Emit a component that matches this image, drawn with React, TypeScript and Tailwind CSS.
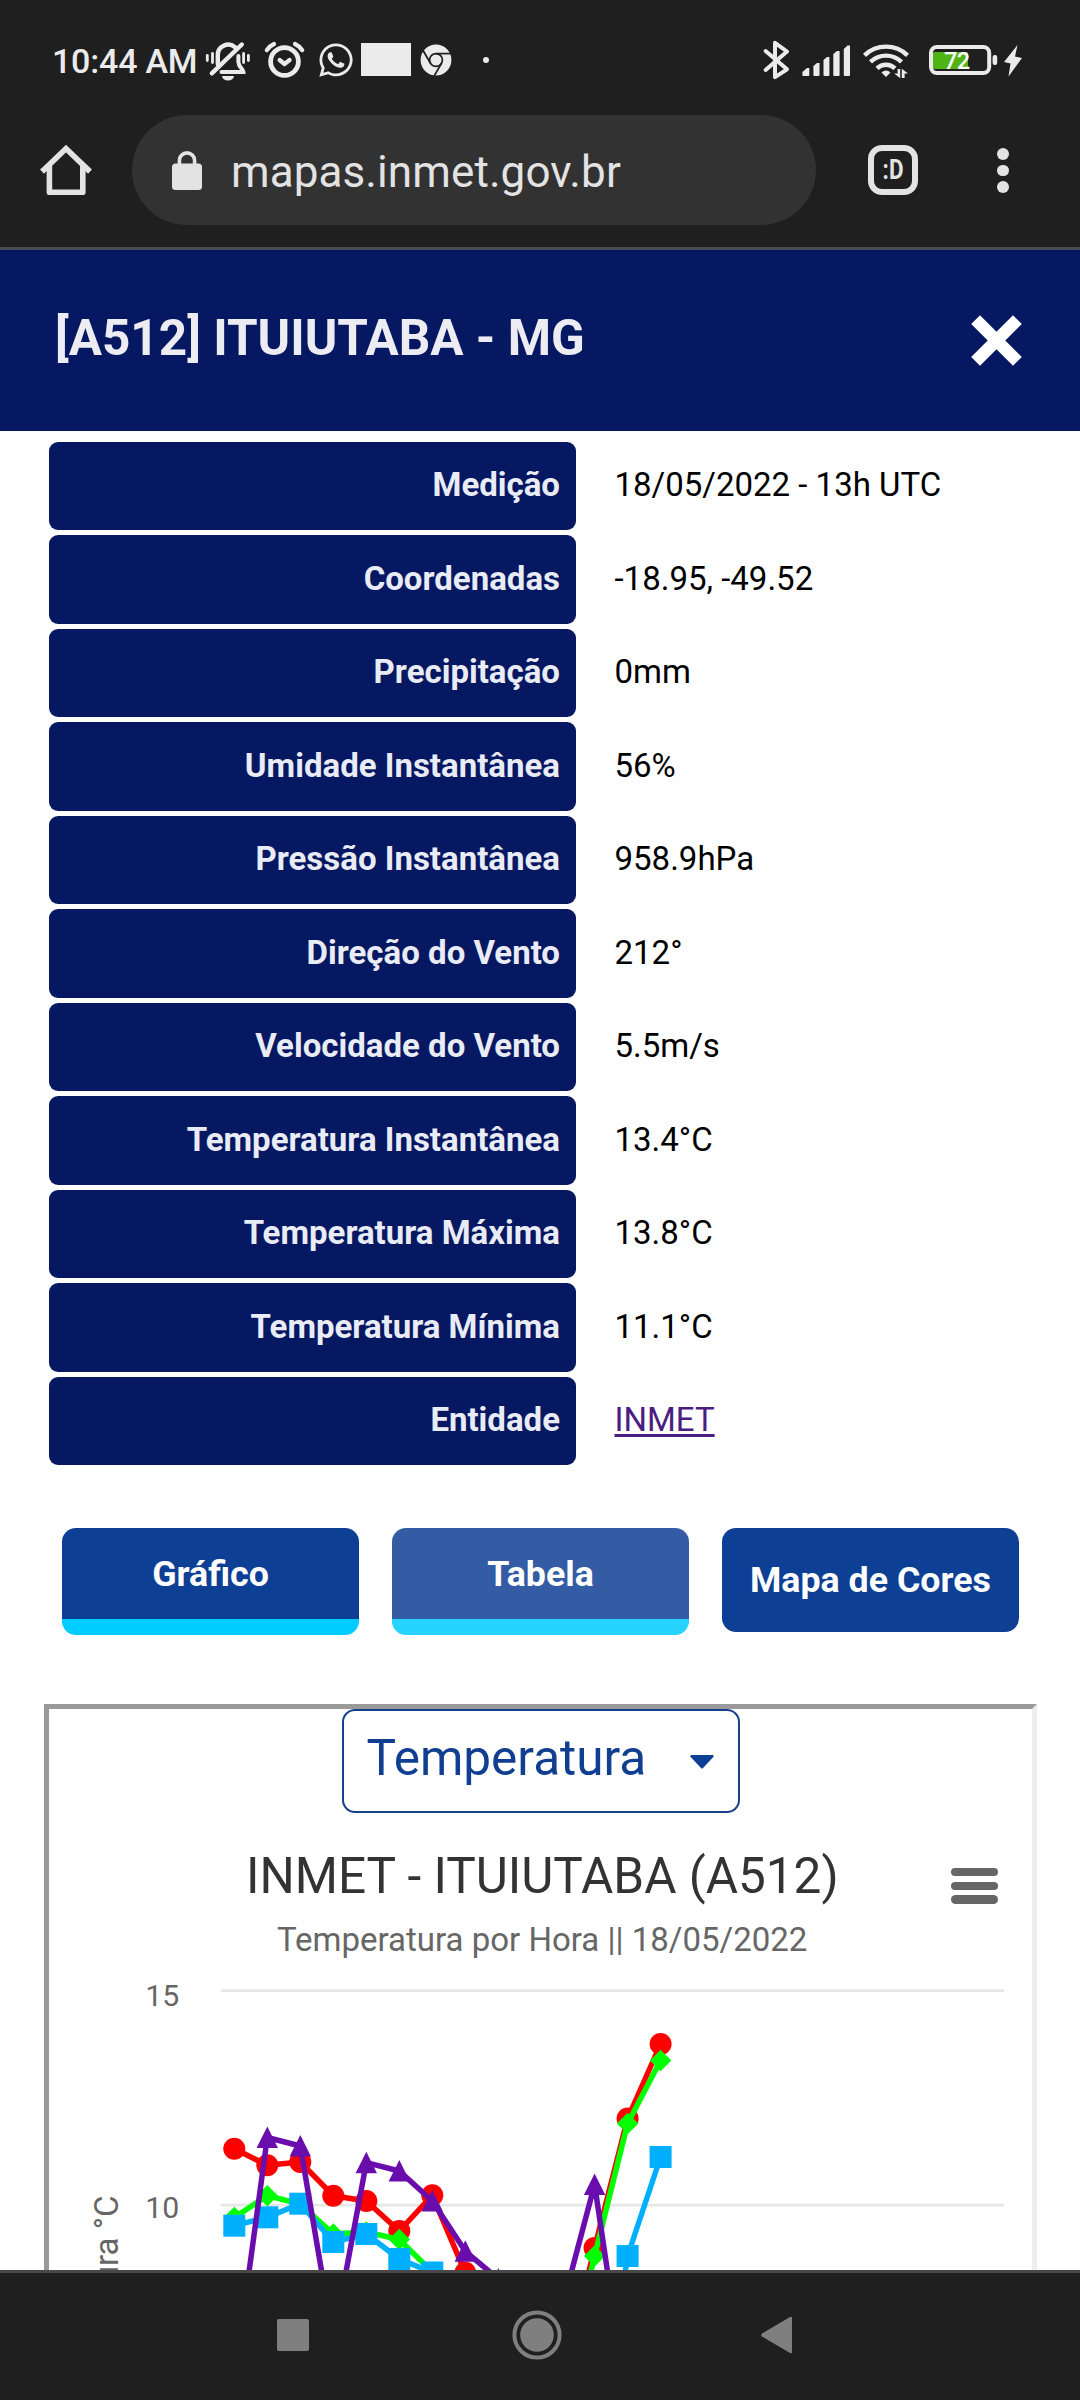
import type { ReactNode } from 'react';
import { FaWhatsapp } from 'react-icons/fa';

const readings = [
  { label: 'Medição', value: '18/05/2022 - 13h UTC' },
  { label: 'Coordenadas', value: '-18.95, -49.52' },
  { label: 'Precipitação', value: '0mm' },
  { label: 'Umidade Instantânea', value: '56%' },
  { label: 'Pressão Instantânea', value: '958.9hPa' },
  { label: 'Direção do Vento', value: '212°' },
  { label: 'Velocidade do Vento', value: '5.5m/s' },
  { label: 'Temperatura Instantânea', value: '13.4°C' },
  { label: 'Temperatura Máxima', value: '13.8°C' },
  { label: 'Temperatura Mínima', value: '11.1°C' },
  { label: 'Entidade', value: 'INMET', link: true },
];

type Shape = 'circle' | 'diamond' | 'square' | 'triangle';

// x position of every hour, midnight first
const hours = [234.3, 267.3, 300.3, 333.3, 366.3, 399.3, 432.3, 465.3, 498.3, 531, 561.6, 594.6, 627.6, 660.6];

const series: { color: string; shape: Shape; ys: number[] }[] = [
  {
    color: '#ff0000',
    shape: 'circle',
    ys: [2148.7, 2165.3, 2162, 2195.7, 2201, 2231, 2195.3, 2272.8, 2330, 2390, 2385, 2247.9, 2118.5, 2044],
  },
  {
    color: '#00ff00',
    shape: 'diamond',
    ys: [2217.5, 2195.7, 2204, 2234, 2232, 2239.5, 2272, 2330, 2390, 2410, 2395, 2256, 2123.5, 2060.5],
  },
  {
    color: '#00b0ff',
    shape: 'square',
    ys: [2225.7, 2217.3, 2203.7, 2242, 2234, 2259, 2272.5, 2340, 2400, 2420, 2430, 2480, 2256, 2157],
  },
  {
    color: '#6a0dad',
    shape: 'triangle',
    ys: [2380, 2137.5, 2146, 2340, 2162.7, 2171, 2201, 2251.3, 2279, 2390, 2309, 2184.5, 2407, 2480],
  },
];

function Marker({ shape, x, y, color }: { shape: Shape; x: number; y: number; color: string }) {
  if (shape === 'circle') return <circle cx={x} cy={y} r={11} fill={color} />;
  if (shape === 'square') return <rect x={x - 11} y={y - 11} width={22} height={22} fill={color} />;
  if (shape === 'diamond') {
    return <path d={`M${x} ${y - 10.7}L${x + 10.7} ${y}L${x} ${y + 10.7}L${x - 10.7} ${y}Z`} fill={color} />;
  }
  return <path d={`M${x} ${y - 11}L${x + 10.7} ${y + 10.5}H${x - 10.7}Z`} fill={color} />;
}

function BellOffIcon() {
  return (
    <svg viewBox="205 40 46 42" className="h-[42px] w-[46px]" fill="none" stroke="#ebebeb" strokeWidth="4.4" strokeLinecap="round">
      <path d="M217.8 64V55.5A10.4 10.4 0 0 1 235 47.2" />
      <path d="M211.8 73.3L241.8 44.5" />
      <path d="M238.4 56V62C238.4 67 243 68.5 243.4 72H221.5" strokeWidth="4" />
      <path d="M222 76H234A6 4.5 0 0 1 222 76Z" fill="#ebebeb" stroke="none" />
      <path d="M207.3 55.5V60.5M212.5 53.5V62.5M243.6 53.5V62.5M248.4 55.5V60.5" strokeWidth="2.8" />
    </svg>
  );
}

function AlarmIcon() {
  return (
    <svg viewBox="263 40 43 42" className="h-[42px] w-[43px]" fill="none" stroke="#ebebeb" strokeLinecap="round" strokeLinejoin="round">
      <circle cx="284.5" cy="61.5" r="13.9" strokeWidth="4.8" />
      <path d="M279.6 60L284.5 64L289.6 60" strokeWidth="4.2" />
      <path d="M266.8 50.2Q269.5 46 274 44M302.2 50.2Q299.5 46 295 44" strokeWidth="4.2" />
    </svg>
  );
}

function ChromeIcon() {
  return (
    <svg viewBox="-16 -16 32 32" className="h-8 w-8">
      <circle r="15.4" fill="#ebebeb" />
      <g stroke="#1f1f1f" strokeWidth="1.7" fill="none">
        <circle r="6.4" />
        <path d="M0 -6.4H15" />
        <path d="M0 -6.4H15" transform="rotate(120)" />
        <path d="M0 -6.4H15" transform="rotate(240)" />
      </g>
    </svg>
  );
}

function RadioIcons() {
  return (
    <svg viewBox="760 38 152 44" className="h-[44px] w-[152px]" fill="#ebebeb">
      {/* bluetooth */}
      <path
        d="M765.6 51L787 69.3L775 77.2V42.8L787 51.5L765.6 70"
        fill="none"
        stroke="#ebebeb"
        strokeWidth="4"
        strokeLinecap="round"
        strokeLinejoin="round"
      />
      {/* signal */}
      <path d="M802.4 72L807 68H809.3V75Q809.3 76 808.3 76H803.4Q802.4 76 802.4 75Z" />
      <path d="M813.4 66L817 63H819.5V75Q819.5 76 818.5 76H814.4Q813.4 76 813.4 75Z" />
      <path d="M823.5 60L827 57H829.4V75Q829.4 76 828.4 76H824.5Q823.5 76 823.5 75Z" />
      <path d="M833.3 54L837 51H839.6V75Q839.6 76 838.6 76H834.3Q833.3 76 833.3 75Z" />
      <path d="M843.8 49L847.5 45.6H850V75Q850 76 849 76H844.8Q843.8 76 843.8 75Z" />
      {/* wifi */}
      <g fill="none" stroke="#ebebeb" strokeWidth="4.4">
        <path d="M864.5 55.3A31 31 0 0 1 907.5 55.3" />
        <path d="M870.5 61.8A22.5 22.5 0 0 1 901.5 61.8" />
        <path d="M877 68.3A13 13 0 0 1 895 68.3" />
      </g>
      <path d="M881.5 72.5Q886 68.7 890.5 72.5L886 77Z" />
      <path d="M897.6 69H900.2V78.2L894.2 73.6H897.6ZM901.8 78V68.8L908 73.4H904.6V78Z" />
    </svg>
  );
}

function BatteryIcon() {
  return (
    <div className="relative h-[30px] w-[95px]">
      <svg viewBox="929 45 95 30" className="h-[30px] w-[95px] overflow-visible">
        <rect x="933" y="52" width="35" height="17" rx="1.5" fill="#4fb314" />
        <rect x="931" y="47" width="58.2" height="26" rx="6" fill="none" stroke="#ebebeb" strokeWidth="4" />
        <rect x="992.6" y="55" width="4.6" height="10" rx="2" fill="#ebebeb" />
        <path d="M1017.5 45L1004 62L1010.5 63.5L1008.5 76.5L1022 58L1015 56.5Z" fill="#ebebeb" />
      </svg>
      <span className="absolute left-[15px] top-[2px] text-[23.5px] leading-[28px] font-medium tracking-[-0.5px] text-white">72</span>
    </div>
  );
}

function StatusBar() {
  return (
    <div className="flex h-[115px] items-start pt-[38px] text-[#ebebeb]">
      <span className="ml-[52px] mt-px w-[153px] whitespace-nowrap text-[34px] leading-[44px] font-medium tracking-[-0.2px]">10:44 AM</span>
      <div className="mt-[2px]"><BellOffIcon /></div>
      <div className="ml-3 mt-[2px]"><AlarmIcon /></div>
      <FaWhatsapp className="ml-[11px] mt-[3px] h-[38px] w-[38px]" />
      <div className="ml-[6px] mt-[5px] h-[33px] w-[50px] bg-[#ebebeb]" />
      <div className="ml-[9px] mt-[6px]"><ChromeIcon /></div>
      <div className="ml-[31px] mt-[19px] h-[6px] w-[6px] rounded-full bg-[#ebebeb]" />
      <div className="ml-auto"><RadioIcons /></div>
      <div className="ml-[17px] mr-[56px] mt-[7px]"><BatteryIcon /></div>
    </div>
  );
}

function AddressBar() {
  return (
    <div className="flex h-[132px] items-start">
      <svg viewBox="40 143 52 54" className="ml-10 mt-7 h-[54px] w-[52px]" fill="none" stroke="#e3e3e3" strokeWidth="5.6" strokeLinecap="round">
        <path d="M44 169.7L66 148.6L88 169.7" strokeLinecap="square" strokeLinejoin="miter" />
        <path d="M49.4 167V192.2H82.8V167" strokeLinejoin="round" />
      </svg>
      <div className="ml-10 flex h-[110px] w-[684px] items-center rounded-full bg-[#323232] pl-10">
        <svg viewBox="172 149 30 41" className="h-[41px] w-[30px]">
          <rect x="172" y="162.5" width="30" height="26.5" rx="3.5" fill="#e3e3e3" />
          <path d="M179.4 164V159.5A7.6 7.6 0 0 1 194.6 159.5V164" fill="none" stroke="#e3e3e3" strokeWidth="3.6" />
        </svg>
        <span className="ml-[29px] mt-1 text-[44px] leading-[56px] tracking-[0.1px] text-[#e3e3e3]">mapas.inmet.gov.br</span>
      </div>
      <div className="ml-[52px] mt-[30px] flex h-[50px] w-[50px] items-center justify-center rounded-[14px] border-[6px] border-[#e3e3e3]">
        <span className="scale-x-80 text-[28px] leading-none font-bold text-[#e3e3e3]">:D</span>
      </div>
      <div className="ml-[79px] mt-[33px] flex flex-col gap-[5px]">
        <i className="h-[11.5px] w-[11.5px] rounded-full bg-[#e3e3e3]" />
        <i className="h-[11.5px] w-[11.5px] rounded-full bg-[#e3e3e3]" />
        <i className="h-[11.5px] w-[11.5px] rounded-full bg-[#e3e3e3]" />
      </div>
    </div>
  );
}

function StationHeader() {
  return (
    <header className="flex h-[181px] items-start justify-between bg-[#051861] pl-[55px] pr-[58px]">
      <h1 className="mt-[59px] text-[49.5px] leading-[58px] font-bold text-[#ececf2]">[A512] ITUIUTABA - MG</h1>
      <svg viewBox="0 0 51 51" className="mt-[65px] h-[51px] w-[51px]" stroke="#fff" strokeWidth="12.5">
        <path d="M4.6 4.6L46.4 46.4M46.4 4.6L4.6 46.4" />
      </svg>
    </header>
  );
}

function Readings() {
  return (
    <dl className="flex flex-col gap-[5.2px] pl-[49px] pt-[11px] text-[33px] leading-[38px]">
      {readings.map((item) => (
        <div key={item.label} className="flex h-[88.3px]">
          <dt className="w-[527px] rounded-[9px] bg-[#051861] pr-4 pt-[24.3px] text-right font-bold text-[#e9ebf5]">{item.label}</dt>
          <dd className="pl-[38.5px] pt-[24.3px] text-black">
            {item.link ? (
              <a className="text-[#4b1d80] underline decoration-[3px] underline-offset-[3px]">{item.value}</a>
            ) : (
              item.value
            )}
          </dd>
        </div>
      ))}
    </dl>
  );
}

function TabButton({ children, className }: { children: ReactNode; className: string }) {
  return (
    <button className={`flex w-[297px] justify-center rounded-[14px] text-[35.75px] leading-[42px] font-bold whitespace-nowrap text-white ${className}`}>
      {children}
    </button>
  );
}

function Chart() {
  return (
    <svg viewBox="49 1975 983 295" className="block h-[295px] w-[983px]" fontFamily="Roboto, sans-serif" fill="#666">
      <path d="M220.7 1990.6H1004.3M220.7 2205.1H1004.3" stroke="#e6e6e6" strokeWidth="2.75" />
      <text x="179.3" y="2005.7" textAnchor="end" fontSize="30.25">15</text>
      <text x="179.3" y="2217.7" textAnchor="end" fontSize="30.25">10</text>
      <text transform="translate(117.7 2195.5) rotate(-90)" textAnchor="end" fontSize="33">Temperatura °C</text>
      {series.map((s) => (
        <g key={s.shape}>
          <polyline
            points={s.ys.map((y, i) => `${hours[i]},${y}`).join(' ')}
            fill="none"
            stroke={s.color}
            strokeWidth={5.5}
            strokeLinejoin="round"
          />
          {s.ys.map((y, i) => (
            <Marker key={i} shape={s.shape} x={hours[i]} y={y} color={s.color} />
          ))}
        </g>
      ))}
    </svg>
  );
}

function ChartFrame() {
  return (
    <section className="ml-[44px] mt-[69px] h-[566px] w-[993px] overflow-hidden border-[5px] border-b-0 border-l-[#9a9a9a] border-r-[#eeeeee] border-t-[#9a9a9a] bg-white">
      <div className="mx-auto flex h-[104px] w-[398px] items-start rounded-[13px] border-2 border-[#16408a] pl-[23px] pr-6">
        <span className="mt-[18.5px] text-[49.5px] leading-[58px] text-[#103f91]">Temperatura</span>
        <svg viewBox="0 0 24 14" className="ml-auto mt-11 h-[14px] w-6">
          <path d="M1.5 0H22.5Q24.5 0.5 23.3 2L13 13Q12 14 11 13L0.7 2Q-.5 .5 1.5 0Z" fill="#0d3f95" />
        </svg>
      </div>
      <div className="flex h-[108px] items-start">
        <h2 className="ml-[197px] mt-[34px] w-[705px] whitespace-nowrap text-[49.5px] leading-[58px] text-[#333]">INMET - ITUIUTABA (A512)</h2>
        <div className="mt-[55px] flex flex-col gap-[5.2px]">
          <i className="h-[8.6px] w-[47px] rounded-full bg-[#666]" />
          <i className="h-[8.6px] w-[47px] rounded-full bg-[#666]" />
          <i className="h-[8.6px] w-[47px] rounded-full bg-[#666]" />
        </div>
      </div>
      <p className="flex h-[54px] items-start pl-[228px] text-[33px] leading-[38px] text-[#666]">Temperatura por Hora || 18/05/2022</p>
      <Chart />
    </section>
  );
}

function NavBar() {
  return (
    <nav className="flex h-[130px] items-start border-t-[3px] border-[#484848] bg-[#1f1f1f]">
      <div className="ml-[277px] mt-[46px] h-8 w-8 rounded-[2px] bg-[#7f7f7f]" />
      <svg viewBox="-25 -25 50 50" className="ml-[203px] mt-[37px] h-[50px] w-[50px]">
        <circle r="22.6" fill="none" stroke="#7f7f7f" strokeWidth="4" />
        <circle r="16.8" fill="#7f7f7f" />
      </svg>
      <svg viewBox="0 0 31 38" className="ml-[199px] mt-[43px] h-[38px] w-[31px]">
        <path d="M29 1Q31 0 31 2V36Q31 38 29 37L1 20.5Q-.5 19 1 17.5Z" fill="#7f7f7f" />
      </svg>
    </nav>
  );
}

export default function App() {
  return (
    <div className="flex h-[2400px] w-[1080px] flex-col overflow-hidden bg-[#fefefe] font-['Roboto',sans-serif]">
      <div className="h-[250px] border-b-[3px] border-[#484c55] bg-[#1f1f1f]">
        <StatusBar />
        <AddressBar />
      </div>
      <StationHeader />
      <main className="h-[1839px] overflow-hidden">
        <Readings />
        <div className="ml-[62px] mt-[62.7px] flex h-[107px] items-start gap-[33px]">
          <TabButton className="h-[107px] border-b-[16px] border-[#00ccff] bg-[#0d3f95] pt-[25px]">Gráfico</TabButton>
          <TabButton className="h-[107px] border-b-[16px] border-[#26d3ff] bg-[#335ca5] pt-[25px]">Tabela</TabButton>
          <TabButton className="h-[104px] bg-[#0d3f95] pt-[31px]">Mapa de Cores</TabButton>
        </div>
        <ChartFrame />
      </main>
      <NavBar />
    </div>
  );
}
